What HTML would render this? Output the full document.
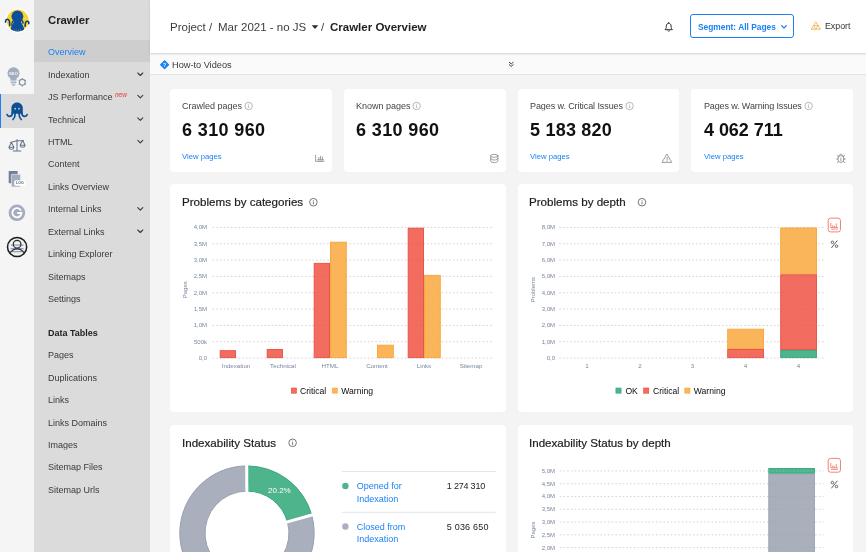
<!DOCTYPE html>
<html>
<head>
<meta charset="utf-8">
<title>Crawler Overview</title>
<style>
*{box-sizing:border-box;margin:0;padding:0}
html,body{width:866px;height:552px;overflow:hidden;background:#f4f4f4;font-family:"Liberation Sans",sans-serif;color:#333}
.abs,.t{position:absolute}
.t{white-space:nowrap;line-height:1;transform:translateY(-50%);will-change:transform}
#rail{position:absolute;left:0;top:0;width:34px;height:552px;background:#f5f5f5}
#side{position:absolute;left:34px;top:0;width:116px;height:552px;background:#dbdbdb}
#sel{position:absolute;left:34px;top:40px;width:116px;height:22px;background:#cecece}
#railsel{position:absolute;left:0;top:94px;width:34px;height:34px;background:#dbdbdb;border-left:1.500px solid #1b80f5}
.m{font-size:9px;color:#3a3a3a;left:48.4px}
.chev{position:absolute;left:137px;width:7px;height:5px}
#head{position:absolute;left:150px;top:0;width:716px;height:53px;background:#fff;box-shadow:0 1px 2.500px rgba(0,0,0,.13)}
#howto{position:absolute;left:150px;top:55px;width:716px;height:20px;background:#fafafa;border-bottom:1px solid #e6e6e6}
.card{position:absolute;background:#fff;border-radius:4px}
.lbl{font-size:9px;color:#444}
.num{font-size:18px;font-weight:bold;color:#111}
.lnk{font-size:7.7px;color:#1b80f5}
.ttl{font-size:11.6px;color:#1c1c1c;-webkit-text-stroke:.2px #1c1c1c}
.ax{font-size:6px;color:#7d8aa3}
.lg{font-size:9px;color:#222}
</style>
</head>
<body>
<div id="rail"></div>
<div id="side"></div>
<div id="sel"></div>
<div id="railsel"></div>

<!-- SIDEBAR TEXT -->
<div class="t" style="left:48px;top:20.7px;font-size:11.3px;font-weight:bold;color:#222">Crawler</div>
<div class="t m" style="top:52.0px;color:#1b80f5">Overview</div>
<div class="t m" style="top:74.8px">Indexation</div>
<div class="t m" style="top:97.2px">JS Performance</div>
<div class="t" style="left:115px;top:94.5px;font-size:6.5px;color:#e53935;font-style:italic">new</div>
<div class="t m" style="top:119.7px">Technical</div>
<div class="t m" style="top:141.5px">HTML</div>
<div class="t m" style="top:163.9px">Content</div>
<div class="t m" style="top:186.9px">Links Overview</div>
<div class="t m" style="top:209.4px">Internal Links</div>
<div class="t m" style="top:231.8px">External Links</div>
<div class="t m" style="top:254.2px">Linking Explorer</div>
<div class="t m" style="top:276.6px">Sitemaps</div>
<div class="t m" style="top:299.1px">Settings</div>
<div class="t m" style="top:333.0px;font-weight:bold;color:#222">Data Tables</div>
<div class="t m" style="top:355.3px">Pages</div>
<div class="t m" style="top:377.7px">Duplications</div>
<div class="t m" style="top:400.2px">Links</div>
<div class="t m" style="top:422.6px">Links Domains</div>
<div class="t m" style="top:445.0px">Images</div>
<div class="t m" style="top:467.4px">Sitemap Files</div>
<div class="t m" style="top:489.9px">Sitemap Urls</div>

<!-- HEADER -->
<div id="head"></div>
<div id="howto"></div>
<div class="t" style="left:170px;top:27.9px;font-size:11.5px;color:#3c3c3c">Project /</div>
<div class="t" style="left:218px;top:27.9px;font-size:11.5px;color:#3c3c3c">Mar 2021 - no JS</div>
<div class="t" style="left:321px;top:27.9px;font-size:11.5px;color:#3c3c3c">/</div>
<div class="t" style="left:330px;top:27.9px;font-size:11.5px;font-weight:bold;color:#222">Crawler Overview</div>
<div class="abs" style="left:690px;top:14px;width:104px;height:24px;border:1px solid #1b80f5;border-radius:3px"></div>
<div class="t" style="left:698px;top:26.8px;font-size:8.4px;font-weight:bold;color:#1b80f5">Segment: All Pages</div>
<div class="t" style="left:824.6px;top:26.4px;font-size:8.8px;color:#333">Export</div>
<div class="t" style="left:172px;top:65.6px;font-size:9.2px;color:#3a3a3a">How-to Videos</div>

<!-- METRIC CARDS -->
<div class="card" style="left:170px;top:89px;width:162px;height:83px"></div>
<div class="card" style="left:344px;top:89px;width:162px;height:83px"></div>
<div class="card" style="left:518px;top:89px;width:161px;height:83px"></div>
<div class="card" style="left:691px;top:89px;width:162px;height:83px"></div>
<div class="t lbl" style="left:182px;top:106px">Crawled pages</div>
<div class="t num" style="left:182px;top:129.6px;letter-spacing:.38px">6 310 960</div>
<div class="t lnk" style="left:182px;top:156.7px">View pages</div>
<div class="t lbl" style="left:356px;top:106px">Known pages</div>
<div class="t num" style="left:356px;top:129.6px;letter-spacing:.38px">6 310 960</div>
<div class="t lbl" style="left:529.600px;top:106px;letter-spacing:-.09px">Pages w. Critical Issues</div>
<div class="t num" style="left:529.600px;top:129.6px;letter-spacing:.22px">5 183 820</div>
<div class="t lnk" style="left:529.600px;top:156.7px">View pages</div>
<div class="t lbl" style="left:703.500px;top:106px;letter-spacing:-.13px">Pages w. Warning Issues</div>
<div class="t num" style="left:703.500px;top:129.6px;letter-spacing:-.05px">4 062 711</div>
<div class="t lnk" style="left:703.500px;top:156.7px">View pages</div>

<!-- CHART CARDS -->
<div class="card" style="left:170px;top:184px;width:336px;height:228px"></div>
<div class="card" style="left:518px;top:184px;width:335px;height:228px"></div>
<div class="card" style="left:170px;top:425px;width:336px;height:140px"></div>
<div class="card" style="left:518px;top:425px;width:335px;height:140px"></div>
<!--CHARTS-->
<svg class="abs" style="left:0;top:0" width="866" height="552" viewBox="0 0 866 552" font-family="Liberation Sans, sans-serif">
<line x1="212.5" x2="494" y1="358.10" y2="358.10" stroke="#d2d4d8" stroke-width="1" stroke-dasharray="1.6 2.1"/>
<line x1="212.5" x2="494" y1="341.76" y2="341.76" stroke="#d2d4d8" stroke-width="1" stroke-dasharray="1.6 2.1"/>
<line x1="212.5" x2="494" y1="325.43" y2="325.43" stroke="#d2d4d8" stroke-width="1" stroke-dasharray="1.6 2.1"/>
<line x1="212.5" x2="494" y1="309.09" y2="309.09" stroke="#d2d4d8" stroke-width="1" stroke-dasharray="1.6 2.1"/>
<line x1="212.5" x2="494" y1="292.75" y2="292.75" stroke="#d2d4d8" stroke-width="1" stroke-dasharray="1.6 2.1"/>
<line x1="212.5" x2="494" y1="276.41" y2="276.41" stroke="#d2d4d8" stroke-width="1" stroke-dasharray="1.6 2.1"/>
<line x1="212.5" x2="494" y1="260.08" y2="260.08" stroke="#d2d4d8" stroke-width="1" stroke-dasharray="1.6 2.1"/>
<line x1="212.5" x2="494" y1="243.74" y2="243.74" stroke="#d2d4d8" stroke-width="1" stroke-dasharray="1.6 2.1"/>
<line x1="212.5" x2="494" y1="227.40" y2="227.40" stroke="#d2d4d8" stroke-width="1" stroke-dasharray="1.6 2.1"/>
<text x="207" y="358.10" font-size="6" text-anchor="end" fill="#7886a0" dominant-baseline="central" >0,0</text>
<text x="207" y="341.76" font-size="6" text-anchor="end" fill="#7886a0" dominant-baseline="central" >500k</text>
<text x="207" y="325.43" font-size="6" text-anchor="end" fill="#7886a0" dominant-baseline="central" >1,0M</text>
<text x="207" y="309.09" font-size="6" text-anchor="end" fill="#7886a0" dominant-baseline="central" >1,5M</text>
<text x="207" y="292.75" font-size="6" text-anchor="end" fill="#7886a0" dominant-baseline="central" >2,0M</text>
<text x="207" y="276.41" font-size="6" text-anchor="end" fill="#7886a0" dominant-baseline="central" >2,5M</text>
<text x="207" y="260.08" font-size="6" text-anchor="end" fill="#7886a0" dominant-baseline="central" >3,0M</text>
<text x="207" y="243.74" font-size="6" text-anchor="end" fill="#7886a0" dominant-baseline="central" >3,5M</text>
<text x="207" y="227.40" font-size="6" text-anchor="end" fill="#7886a0" dominant-baseline="central" >4,0M</text>
<text transform="translate(185.2,289.8) rotate(-90)" font-size="6" text-anchor="middle" fill="#7886a0" dominant-baseline="central">Pages</text>
<text x="236" y="365.60" font-size="6.2" text-anchor="middle" fill="#7886a0" dominant-baseline="central" >Indexation</text>
<text x="283" y="365.60" font-size="6.2" text-anchor="middle" fill="#7886a0" dominant-baseline="central" >Technical</text>
<text x="330" y="365.60" font-size="6.2" text-anchor="middle" fill="#7886a0" dominant-baseline="central" >HTML</text>
<text x="377" y="365.60" font-size="6.2" text-anchor="middle" fill="#7886a0" dominant-baseline="central" >Content</text>
<text x="424" y="365.60" font-size="6.2" text-anchor="middle" fill="#7886a0" dominant-baseline="central" >Links</text>
<text x="471" y="365.60" font-size="6.2" text-anchor="middle" fill="#7886a0" dominant-baseline="central" >Sitemap</text>
<rect x="220.20" y="350.70" width="15.30" height="6.90" fill="#f05345" stroke="#e63a2c" stroke-width="1" opacity=".85"/>
<rect x="267.20" y="349.50" width="15.30" height="8.10" fill="#f05345" stroke="#e63a2c" stroke-width="1" opacity=".85"/>
<rect x="314.20" y="263.40" width="15.30" height="94.20" fill="#f05345" stroke="#e63a2c" stroke-width="1" opacity=".85"/>
<rect x="330.50" y="242.20" width="15.80" height="115.40" fill="#faa93e" stroke="#f59a22" stroke-width="1" opacity=".85"/>
<rect x="377.50" y="345.20" width="15.80" height="12.40" fill="#faa93e" stroke="#f59a22" stroke-width="1" opacity=".85"/>
<rect x="408.20" y="228.20" width="15.30" height="129.40" fill="#f05345" stroke="#e63a2c" stroke-width="1" opacity=".85"/>
<rect x="424.50" y="275.40" width="15.80" height="82.20" fill="#faa93e" stroke="#f59a22" stroke-width="1" opacity=".85"/>
<rect x="291.3" y="388" width="5.2" height="5.2" fill="#f26d61" stroke="#ea4b3f" stroke-width=".6"/>
<text x="300" y="390.60" font-size="8.6" text-anchor="start" fill="#0c0c0c" dominant-baseline="central" >Critical</text>
<rect x="332.2" y="388" width="5.2" height="5.2" fill="#fbb65b" stroke="#f8a945" stroke-width=".6"/>
<text x="341.3" y="390.60" font-size="8.6" text-anchor="start" fill="#0c0c0c" dominant-baseline="central" >Warning</text>
<line x1="559.2" x2="823.5" y1="358.10" y2="358.10" stroke="#d2d4d8" stroke-width="1" stroke-dasharray="1.6 2.1"/>
<line x1="559.2" x2="823.5" y1="341.76" y2="341.76" stroke="#d2d4d8" stroke-width="1" stroke-dasharray="1.6 2.1"/>
<line x1="559.2" x2="823.5" y1="325.43" y2="325.43" stroke="#d2d4d8" stroke-width="1" stroke-dasharray="1.6 2.1"/>
<line x1="559.2" x2="823.5" y1="309.09" y2="309.09" stroke="#d2d4d8" stroke-width="1" stroke-dasharray="1.6 2.1"/>
<line x1="559.2" x2="823.5" y1="292.75" y2="292.75" stroke="#d2d4d8" stroke-width="1" stroke-dasharray="1.6 2.1"/>
<line x1="559.2" x2="823.5" y1="276.41" y2="276.41" stroke="#d2d4d8" stroke-width="1" stroke-dasharray="1.6 2.1"/>
<line x1="559.2" x2="823.5" y1="260.08" y2="260.08" stroke="#d2d4d8" stroke-width="1" stroke-dasharray="1.6 2.1"/>
<line x1="559.2" x2="823.5" y1="243.74" y2="243.74" stroke="#d2d4d8" stroke-width="1" stroke-dasharray="1.6 2.1"/>
<line x1="559.2" x2="823.5" y1="227.40" y2="227.40" stroke="#d2d4d8" stroke-width="1" stroke-dasharray="1.6 2.1"/>
<text x="555" y="358.10" font-size="6" text-anchor="end" fill="#7886a0" dominant-baseline="central" >0,0</text>
<text x="555" y="341.76" font-size="6" text-anchor="end" fill="#7886a0" dominant-baseline="central" >1,0M</text>
<text x="555" y="325.43" font-size="6" text-anchor="end" fill="#7886a0" dominant-baseline="central" >2,0M</text>
<text x="555" y="309.09" font-size="6" text-anchor="end" fill="#7886a0" dominant-baseline="central" >3,0M</text>
<text x="555" y="292.75" font-size="6" text-anchor="end" fill="#7886a0" dominant-baseline="central" >4,0M</text>
<text x="555" y="276.41" font-size="6" text-anchor="end" fill="#7886a0" dominant-baseline="central" >5,0M</text>
<text x="555" y="260.08" font-size="6" text-anchor="end" fill="#7886a0" dominant-baseline="central" >6,0M</text>
<text x="555" y="243.74" font-size="6" text-anchor="end" fill="#7886a0" dominant-baseline="central" >7,0M</text>
<text x="555" y="227.40" font-size="6" text-anchor="end" fill="#7886a0" dominant-baseline="central" >8,0M</text>
<text transform="translate(532.6,289.7) rotate(-90)" font-size="6" text-anchor="middle" fill="#7886a0" dominant-baseline="central">Problems</text>
<text x="587" y="365.70" font-size="6.2" text-anchor="middle" fill="#7886a0" dominant-baseline="central" >1</text>
<text x="639.9" y="365.70" font-size="6.2" text-anchor="middle" fill="#7886a0" dominant-baseline="central" >2</text>
<text x="692.6" y="365.70" font-size="6.2" text-anchor="middle" fill="#7886a0" dominant-baseline="central" >3</text>
<text x="745.5" y="365.70" font-size="6.2" text-anchor="middle" fill="#7886a0" dominant-baseline="central" >4</text>
<text x="798.4" y="365.70" font-size="6.2" text-anchor="middle" fill="#7886a0" dominant-baseline="central" >4</text>
<rect x="727.70" y="329.20" width="35.80" height="19.30" fill="#faa93e" stroke="#f59a22" stroke-width="1" opacity=".85"/>
<rect x="727.70" y="349.50" width="35.80" height="8.10" fill="#f05345" stroke="#e63a2c" stroke-width="1" opacity=".85"/>
<rect x="780.70" y="228.00" width="35.80" height="45.80" fill="#faa93e" stroke="#f59a22" stroke-width="1" opacity=".85"/>
<rect x="780.70" y="274.80" width="35.80" height="74.70" fill="#f05345" stroke="#e63a2c" stroke-width="1" opacity=".85"/>
<rect x="780.70" y="350.50" width="35.80" height="7.10" fill="#2ea778" stroke="#1f9c6b" stroke-width="1" opacity=".85"/>
<rect x="615.9" y="388" width="5.2" height="5.2" fill="#4db48c" stroke="#3ba67d" stroke-width=".6"/>
<text x="625.4" y="390.60" font-size="8.6" text-anchor="start" fill="#0c0c0c" dominant-baseline="central" >OK</text>
<rect x="643.6" y="388" width="5.2" height="5.2" fill="#f26d61" stroke="#ea4b3f" stroke-width=".6"/>
<text x="653" y="390.60" font-size="8.6" text-anchor="start" fill="#0c0c0c" dominant-baseline="central" >Critical</text>
<rect x="684.8" y="388" width="5.2" height="5.2" fill="#fbb65b" stroke="#f8a945" stroke-width=".6"/>
<text x="693.8" y="390.60" font-size="8.6" text-anchor="start" fill="#0c0c0c" dominant-baseline="central" >Warning</text>
<path d="M247.00 465.90 A67.2 67.2 0 0 1 311.72 515.03 L287.45 521.81 A42 42 0 0 0 247.00 491.10 Z" fill="#4db48c" stroke="#3ba67d" stroke-width="1"/>
<path d="M311.72 515.03 A67.2 67.2 0 1 1 247.00 465.90 L247.00 491.10 A42 42 0 1 0 287.45 521.81 Z" fill="#a9afbc" stroke="#979fb0" stroke-width="1"/>
<line x1="246.83" y1="493.10" x2="246.70" y2="463.90" stroke="#fff" stroke-width="3"/>
<line x1="285.53" y1="522.34" x2="313.65" y2="514.49" stroke="#fff" stroke-width="3"/>
<text x="279.4" y="490.20" font-size="8" text-anchor="middle" fill="#fff" dominant-baseline="central" >20.2%</text>
<line x1="341.8" x2="495.7" y1="471.5" y2="471.5" stroke="#e1e6ec" stroke-width="1"/>
<line x1="341.8" x2="495.7" y1="512.3" y2="512.3" stroke="#e1e6ec" stroke-width="1"/>
<circle cx="345.4" cy="486" r="3.2" fill="#4db48c"/>
<circle cx="345.4" cy="526.5" r="3.2" fill="#a9afbc"/>
<text x="356.8" y="486.00" font-size="9" text-anchor="start" fill="#1b80f5" dominant-baseline="central" >Opened for</text>
<text x="356.8" y="498.70" font-size="9" text-anchor="start" fill="#1b80f5" dominant-baseline="central" >Indexation</text>
<text x="356.8" y="526.50" font-size="9" text-anchor="start" fill="#1b80f5" dominant-baseline="central" >Closed from</text>
<text x="356.8" y="539.20" font-size="9" text-anchor="start" fill="#1b80f5" dominant-baseline="central" >Indexation</text>
<text x="446.8" y="486.00" font-size="9" text-anchor="start" fill="#222" dominant-baseline="central" letter-spacing="-.2">1 274 310</text>
<text x="446.8" y="526.50" font-size="9" text-anchor="start" fill="#222" dominant-baseline="central" letter-spacing=".2">5 036 650</text>
<line x1="559.8" x2="823.5" y1="470.90" y2="470.90" stroke="#d2d4d8" stroke-width="1" stroke-dasharray="1.6 2.1"/>
<line x1="559.8" x2="823.5" y1="483.69" y2="483.69" stroke="#d2d4d8" stroke-width="1" stroke-dasharray="1.6 2.1"/>
<line x1="559.8" x2="823.5" y1="496.48" y2="496.48" stroke="#d2d4d8" stroke-width="1" stroke-dasharray="1.6 2.1"/>
<line x1="559.8" x2="823.5" y1="509.27" y2="509.27" stroke="#d2d4d8" stroke-width="1" stroke-dasharray="1.6 2.1"/>
<line x1="559.8" x2="823.5" y1="522.06" y2="522.06" stroke="#d2d4d8" stroke-width="1" stroke-dasharray="1.6 2.1"/>
<line x1="559.8" x2="823.5" y1="534.85" y2="534.85" stroke="#d2d4d8" stroke-width="1" stroke-dasharray="1.6 2.1"/>
<line x1="559.8" x2="823.5" y1="547.64" y2="547.64" stroke="#d2d4d8" stroke-width="1" stroke-dasharray="1.6 2.1"/>
<text x="555" y="470.90" font-size="6" text-anchor="end" fill="#7886a0" dominant-baseline="central" >5,0M</text>
<text x="555" y="483.69" font-size="6" text-anchor="end" fill="#7886a0" dominant-baseline="central" >4,5M</text>
<text x="555" y="496.48" font-size="6" text-anchor="end" fill="#7886a0" dominant-baseline="central" >4,0M</text>
<text x="555" y="509.27" font-size="6" text-anchor="end" fill="#7886a0" dominant-baseline="central" >3,5M</text>
<text x="555" y="522.06" font-size="6" text-anchor="end" fill="#7886a0" dominant-baseline="central" >3,0M</text>
<text x="555" y="534.85" font-size="6" text-anchor="end" fill="#7886a0" dominant-baseline="central" >2,5M</text>
<text x="555" y="547.64" font-size="6" text-anchor="end" fill="#7886a0" dominant-baseline="central" >2,0M</text>
<text transform="translate(532.8,530) rotate(-90)" font-size="6" text-anchor="middle" fill="#7886a0" dominant-baseline="central">Pages</text>
<rect x="768.80" y="474.20" width="45.60" height="85.30" fill="#9aa1b0" stroke="#8c94a5" stroke-width="1" opacity=".85"/>
<rect x="768.80" y="468.50" width="45.60" height="4.70" fill="#2ea778" stroke="#1f9c6b" stroke-width="1" opacity=".85"/>
<line x1="768.8" x2="814.4" y1="470.9" y2="470.9" stroke="#6fc9a6" stroke-width="1" stroke-dasharray="1.4 2.1"/>
<rect x="828.2" y="218.1" width="12.3" height="13.8" rx="2.4" fill="#fff" stroke="#f08473" stroke-width="1"/>
<path d="M830.8000000000001 222.7 V227.5 H838.0 M832.8000000000001 227.5 V225.1 M834.5 227.5 V225.9 M836.3000000000001 227.5 V223.5 M831.0 229.1 H837.8000000000001" fill="none" stroke="#f08473" stroke-width=".9"/>
<path d="M837.3000000000001 240.5 L831.4000000000001 248.0" stroke="#555" stroke-width=".95" fill="none"/>
<circle cx="832.4000000000001" cy="242.29999999999998" r="1.25" fill="none" stroke="#555" stroke-width=".9"/>
<circle cx="836.5000000000001" cy="246.2" r="1.25" fill="none" stroke="#555" stroke-width=".9"/>
<rect x="828.2" y="458.4" width="12.3" height="13.8" rx="2.4" fill="#fff" stroke="#f08473" stroke-width="1"/>
<path d="M830.8000000000001 463.0 V467.79999999999995 H838.0 M832.8000000000001 467.79999999999995 V465.4 M834.5 467.79999999999995 V466.2 M836.3000000000001 467.79999999999995 V463.79999999999995 M831.0 469.4 H837.8000000000001" fill="none" stroke="#f08473" stroke-width=".9"/>
<path d="M837.3000000000001 480.8 L831.4000000000001 488.3" stroke="#555" stroke-width=".95" fill="none"/>
<circle cx="832.4000000000001" cy="482.6" r="1.25" fill="none" stroke="#555" stroke-width=".9"/>
<circle cx="836.5000000000001" cy="486.5" r="1.25" fill="none" stroke="#555" stroke-width=".9"/>
</svg>
<!--/CHARTS-->
<div class="t ttl" style="left:181.600px;top:202.3px">Problems by categories</div>
<div class="t ttl" style="left:529px;top:202.3px">Problems by depth</div>
<div class="t ttl" style="left:181.600px;top:442.8px">Indexability Status</div>
<div class="t ttl" style="left:529px;top:442.8px">Indexability Status by depth</div>
<!--ICONS-->
<svg class="abs" style="left:0;top:0" width="866" height="552" viewBox="0 0 866 552" font-family="Liberation Sans, sans-serif">
<!-- logo -->
<g id="logo">
<defs><clipPath id="lc"><circle cx="17.700" cy="20.500" r="11"/></clipPath></defs>
<circle cx="17.700" cy="20.500" r="12.300" fill="#fff"/>
<circle cx="17.700" cy="20.500" r="11" fill="#fbd32f"/>
<g clip-path="url(#lc)">
<circle cx="17.400" cy="16.300" r="5.900" fill="#0b4f9c"/>
<path d="M14 20.500c-.2 2.600-1.700 4.200-2.800 6.400-.5 1.200-.7 2.800-.6 5h13.600c.1-2.200-.1-3.800-.6-5-1.100-2.200-2.600-3.800-2.800-6.400z" fill="#0b4f9c"/>
<path d="M13.300 20.800c-1.200 1-1.800 2.600-1.600 4.400M21.600 20.300c1.200.6 1.700 1.700 1.300 3" fill="none" stroke="#0a3f86" stroke-width="1.300" stroke-linecap="round"/>
<path d="M14.200 29.200v2M16.300 29.600v2M18.500 29.600v2M20.600 29.200v2" stroke="#6f8fb5" stroke-width=".6"/>
</g>
<path d="M9.700 25.600c.1-3.200-.2-6.400-2.200-6.400-1.500 0-2.100 1.500-1.900 3" fill="none" stroke="#0a3f86" stroke-width="1.600" stroke-linecap="round"/>
<path d="M25.100 26.200c0-2.600.3-5 2.100-5 1.300 0 1.800 1.200 1.600 2.500" fill="none" stroke="#0a3f86" stroke-width="1.600" stroke-linecap="round"/>
</g>
<!-- seo bulb + gear -->
<g id="bulb">
<circle cx="13.5" cy="73.3" r="6" fill="#a4adc0"/>
<path d="M10.400 78h6.200v2.200h-6.200z" fill="#a4adc0"/>
<path d="M10.600 81h5.800M10.600 82.600h5.800M11.400 84.200h4.200M12.600 85.600h1.800" stroke="#a4adc0" stroke-width="1" fill="none"/>
<text x="13.500" y="73.500" font-size="4.200" font-weight="bold" fill="#f3f3f3" text-anchor="middle" dominant-baseline="central">SEO</text>
<circle cx="22.300" cy="82.300" r="2.900" fill="none" stroke="#8892a5" stroke-width="1.100"/>
<path d="M22.300 78.200v1.200M22.300 85.200v1.200M18.700 80.200l1.100.6M24.800 83.800l1.100.6M18.700 84.400l1.100-.6M24.800 80.800l1.100-.6" stroke="#8892a5" stroke-width="1.300" fill="none"/>
</g>
<!-- active octopus -->
<g id="octo">
<path d="M17.100 102.400c-3.300 0-5.700 2.500-5.700 5.700v5.600h11.400v-5.600c0-3.200-2.400-5.700-5.700-5.700z" fill="#0b4f9c"/>
<path d="M12.400 112.800c0 2.600-1.400 3.600-2.900 3.600-1.400 0-2.200-.8-2.400-1.800M21.800 112.800c0 2.600 1.400 3.600 2.900 3.600 1.400 0 2.200-.8 2.400-1.800M15.200 113.200c0 2.800-.6 4.800-2.200 6.300M19 113.200c0 2.800.6 4.800 2.200 6.300" fill="none" stroke="#0b4f9c" stroke-width="1.700" stroke-linecap="round"/>
<circle cx="15.200" cy="108.700" r=".85" fill="#fdd835"/><circle cx="19" cy="108.700" r=".85" fill="#fdd835"/>
</g>
<!-- scales -->
<g id="scales" fill="none" stroke="#66748a" stroke-width="1.050" stroke-linecap="round" stroke-linejoin="round">
<path d="M17 139.600v11M13.200 151h7.600M10.400 142.400c2.400-.2 4.400-1.200 6.600-1.600 2.200-.4 4.200.2 6.400-.4"/>
<path d="M11.400 142.600l-2.500 4.600h5zM8.900 147.200c.2 1.400 1.200 2.100 2.500 2.100s2.300-.7 2.500-2.100"/>
<path d="M22.600 140.600l-2.500 4.600h5zM20.100 145.200c.2 1.400 1.200 2.100 2.500 2.100s2.300-.7 2.500-2.100"/>
</g>
<!-- log docs -->
<g id="log">
<rect x="8.700" y="171" width="9" height="12.200" rx=".6" fill="#6d8097"/>
<rect x="11.300" y="174.300" width="9.300" height="12.600" rx=".6" fill="#a4adc0" stroke="#f5f5f5" stroke-width=".6"/>
<rect x="14.200" y="180.200" width="11.400" height="5.600" rx="1.600" fill="#fff"/>
<text x="19.900" y="183.100" font-size="3.600" font-weight="bold" fill="#5f6c7f" text-anchor="middle" dominant-baseline="central">LOG</text>
</g>
<!-- G -->
<g id="gicon">
<circle cx="16.900" cy="212.800" r="8.300" fill="#a4adc0"/>
<path d="M21 210.600a4.600 4.600 0 1 0 .5 2.400h-4.300" fill="none" stroke="#fff" stroke-width="1.900"/>
</g>
<!-- user -->
<g id="user">
<circle cx="17.100" cy="247" r="9.600" fill="#f0f0f0" stroke="#1c1c1c" stroke-width="1.500"/>
<path d="M11 245.200h12.400M10.600 248.600h13M12 251.600h10.500" stroke="#8fa0bd" stroke-width="1.300"/>
<circle cx="17.100" cy="244.200" r="3.800" fill="none" stroke="#2a2a2a" stroke-width="1.200"/>
<path d="M9.800 253.200c2-3.200 4.400-4.400 7.300-4.400s5.300 1.200 7.300 4.400" fill="none" stroke="#2a2a2a" stroke-width="1.200"/>
</g>
<!-- sidebar chevrons -->
<g fill="none" stroke="#3a3a3a" stroke-width="1.100" stroke-linecap="round" stroke-linejoin="round">
<path d="M137.800 73l2.500 2.500 2.500-2.500"/>
<path d="M137.800 95.400l2.500 2.500 2.500-2.500"/>
<path d="M137.800 117.900l2.500 2.500 2.500-2.500"/>
<path d="M137.800 140.300l2.500 2.500 2.500-2.500"/>
<path d="M137.800 207.600l2.500 2.500 2.500-2.500"/>
<path d="M137.800 230l2.500 2.500 2.500-2.500"/>
</g>
<!-- header -->
<path d="M311.700 25.300h6.600l-3.300 3.700z" fill="#2a2a2a"/>
<g id="bell" fill="none" stroke="#333" stroke-width="1" stroke-linejoin="round" stroke-linecap="round">
<path d="M665.300 29.400c.9-.8 1-1.800 1-3.300 0-1.700 1-2.800 2.400-2.800s2.400 1.100 2.400 2.800c0 1.500.1 2.500 1 3.300z"/>
<path d="M667.800 30.800c.5.600 1.300.6 1.800 0M668.700 22.400v.8"/>
</g>
<path d="M781.600 25.600l2.400 2.400 2.400-2.400" fill="none" stroke="#1b80f5" stroke-width="1.200" stroke-linecap="round" stroke-linejoin="round"/>
<g id="export" fill="none" stroke="#f5a35f" stroke-width=".8" stroke-linejoin="round">
<path d="M815.800 21.900l4.500 7.300h-9z"/>
<path d="M813.550 25.550h4.500l-2.250 3.650z"/>
<g fill="#fdd535" stroke="none"><circle cx="815.800" cy="22.200" r=".75"/><circle cx="811.700" cy="28.900" r=".75"/><circle cx="819.900" cy="28.900" r=".75"/><circle cx="813.600" cy="25.600" r=".7"/><circle cx="818" cy="25.600" r=".7"/><circle cx="815.800" cy="29" r=".7"/></g>
</g>
<!-- howto -->
<path d="M164.600 59.900l4.800 4.800-4.800 4.800-4.800-4.800z" fill="#1b80f5"/>
<text x="164.600" y="64.900" font-size="5" font-weight="bold" fill="#fff" text-anchor="middle" dominant-baseline="central">?</text>
<path d="M509.300 62.300l1.900 1.700 1.900-1.700M509.300 64.700l1.900 1.700 1.900-1.700" fill="none" stroke="#3a3a3a" stroke-width=".95" stroke-linecap="round" stroke-linejoin="round"/>
<!-- info icons -->
<g id="infos" fill="none" stroke="#9a9a9a" stroke-width=".7">
<circle cx="248.600" cy="106" r="3.700"/><path d="M248.600 105.300v2.700M248.600 103.800v.7"/>
<circle cx="416.600" cy="106" r="3.700"/><path d="M416.600 105.300v2.700M416.600 103.800v.7"/>
<circle cx="629.600" cy="106" r="3.700"/><path d="M629.600 105.300v2.700M629.600 103.800v.7"/>
<circle cx="808.600" cy="106" r="3.700"/><path d="M808.600 105.300v2.700M808.600 103.800v.7"/>
</g>
<g id="infos2" fill="none" stroke="#555" stroke-width=".8">
<circle cx="313.400" cy="202.200" r="3.800"/><path d="M313.400 201.500v2.800M313.400 200v.7"/>
<circle cx="642" cy="202.200" r="3.800"/><path d="M642 201.500v2.800M642 200v.7"/>
<circle cx="292.600" cy="442.800" r="3.800"/><path d="M292.600 442.100v2.800M292.600 440.600v.7"/>
</g>
<!-- card icons -->
<g fill="none" stroke="#858585" stroke-width=".8" stroke-linecap="round" stroke-linejoin="round">
<path d="M315.600 155.200v6.200h8.400M318.800 160v-2.600M320.600 160v-3.800M322.400 160v-3M317.600 159.800h6"/>
<ellipse cx="494.300" cy="155.800" rx="3.600" ry="1.500"/><path d="M490.700 155.800v5.200c0 .9 1.600 1.600 3.600 1.600s3.600-.7 3.600-1.600v-5.200M490.700 158.400c0 .9 1.600 1.600 3.600 1.600s3.600-.7 3.600-1.600"/>
<path d="M667.100 154.400l4.700 8h-9.400zM667.100 157.400v2.600M667.100 161v.3"/>
<ellipse cx="840.900" cy="159" rx="3.100" ry="3.500"/><path d="M838.700 156.400c.3-1.500 1.200-2.200 2.200-2.200s1.900.7 2.200 2.200M836.600 159h1.400M843.800 159h1.400M837.200 155.600l1.300 1.200M844.600 155.600l-1.300 1.200M837.200 162.600l1.300-1.200M844.600 162.600l-1.300-1.200M840.900 158v3"/>
</g>
</svg>

<!--/ICONS-->
</body>
</html>
